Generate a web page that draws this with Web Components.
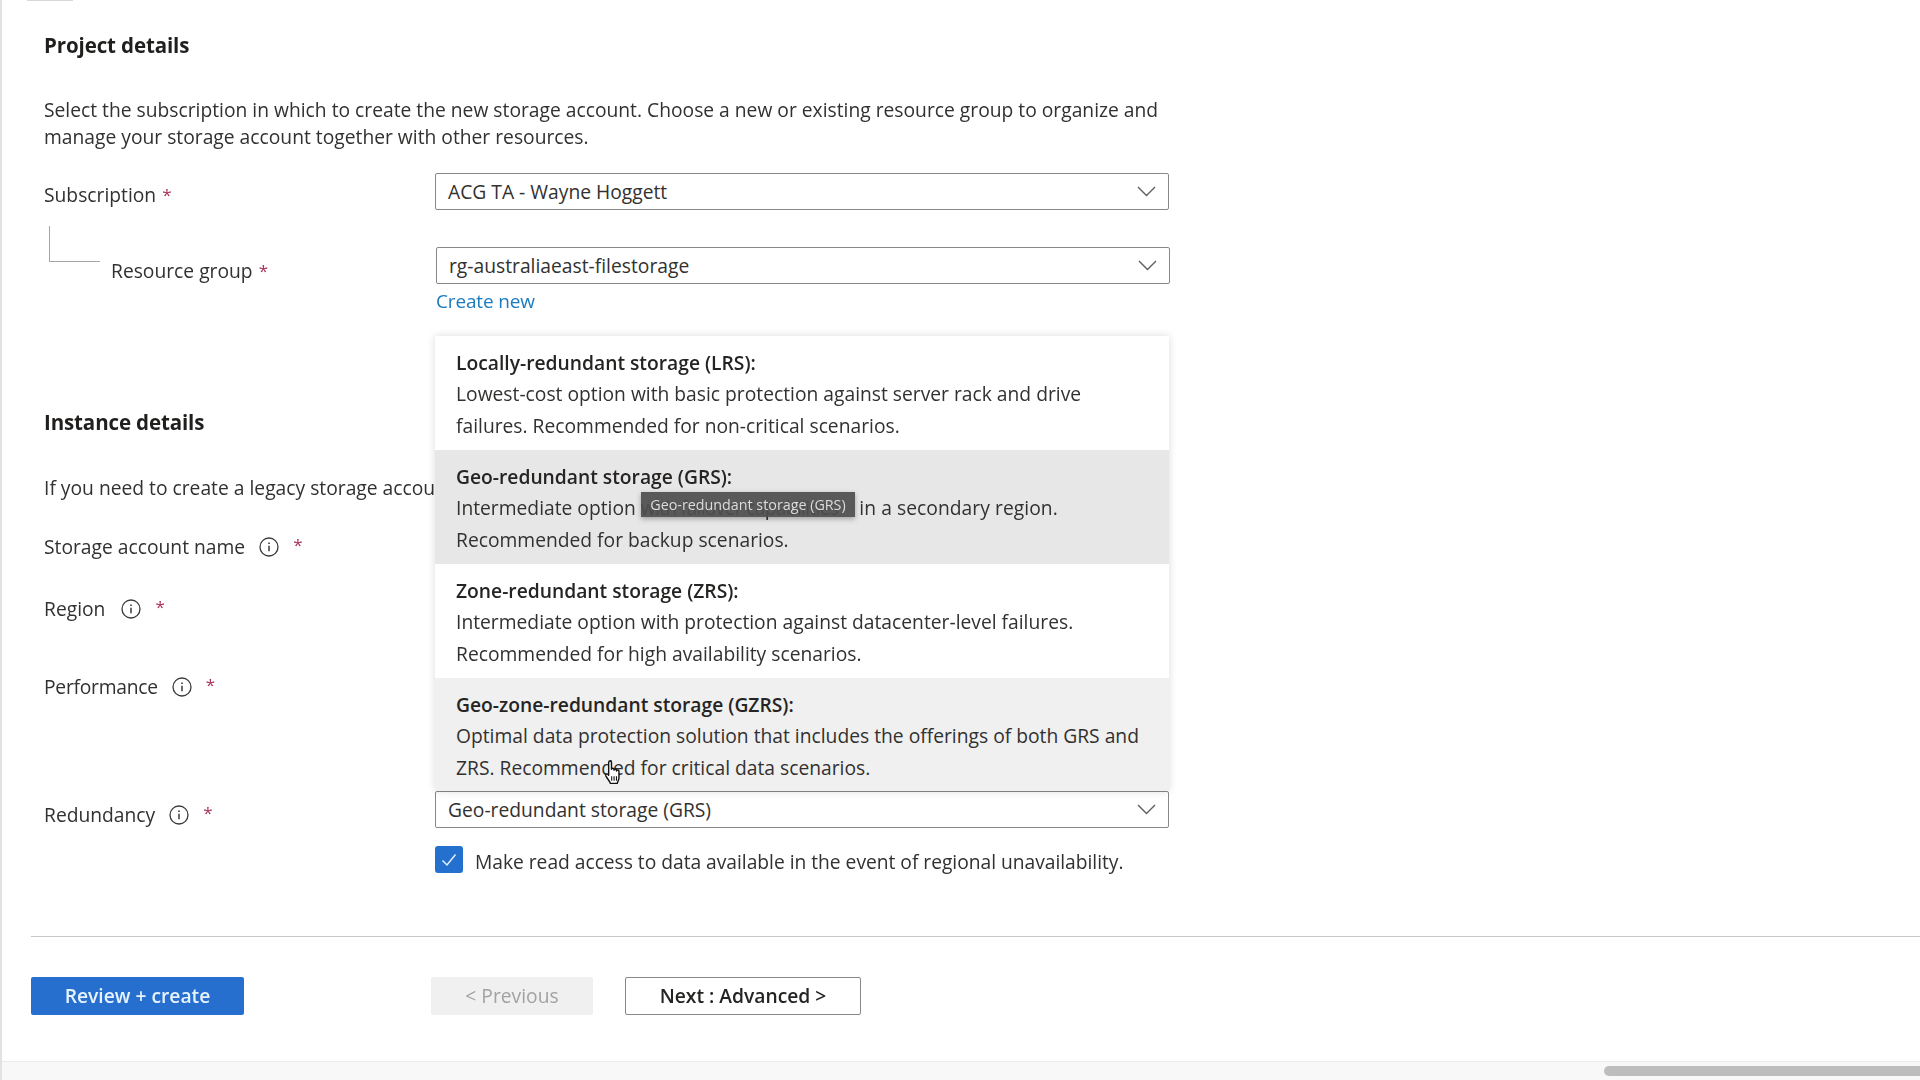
<!DOCTYPE html>
<html>
<head>
<meta charset="utf-8">
<title>Create a storage account</title>
<style>
    html, body { margin: 0; padding: 0; background: #fff; }
    body { width: 1920px; height: 1080px; overflow: hidden; font-family: "Open Sans", "Liberation Sans", sans-serif; }
</style>
</head>
<body>
<az-page>
    <az-heading style="margin-top: 30px">Project details</az-heading>
    <az-text style="margin-top: 35.500px; width: 1130px">Select the subscription in which to create the new storage account. Choose a new or existing resource group to organize and manage your storage account together with other resources.</az-text>

    <az-field label="Subscription" required style="margin-top: 22.500px">
        <az-select value="ACG TA - Wayne Hoggett"></az-select>
    </az-field>
    <az-field label="Resource group" required nested style="margin-top: 37px">
        <az-select value="rg-australiaeast-filestorage" style="margin: 0 -1px 0 1px"></az-select>
        <az-link>Create new</az-link>
    </az-field>

    <az-heading style="margin-top: 85px">Instance details</az-heading>
    <az-text style="margin-top: 37px; width: 391px; height: 27px; white-space: nowrap">If you need to create a legacy storage accou</az-text>

    <az-field label="Storage account name" info required style="margin-top: 32px; height: 27px"></az-field>
    <az-field label="Region" info required style="margin-top: 35px; height: 27px"></az-field>
    <az-field label="Performance" info required style="margin-top: 51px; height: 27px"></az-field>

    <az-field label="Redundancy" info required style="margin-top: 91px">
        <az-select value="Geo-redundant storage (GRS)">
            <az-dropdown slot="popup">
                <az-option title="Locally-redundant storage (LRS):">Lowest-cost option with basic protection against server rack and drive failures. Recommended for non-critical scenarios.</az-option>
                <az-option state="selected" title="Geo-redundant storage (GRS):">Intermediate option <span style="letter-spacing: -.7px">with failover capabilities</span> <span style="letter-spacing: .05px; margin-left: 16px">in a secondary region.</span> Recommended for backup scenarios.<az-tooltip slot="tip">Geo-redundant storage (GRS)</az-tooltip></az-option>
                <az-option title="Zone-redundant storage (ZRS):">Intermediate option with protection against datacenter-level failures. Recommended for high availability scenarios.</az-option>
                <az-option state="hover" style="height: 113px" title="Geo-zone-redundant storage (GZRS):">Optimal data protection solution that includes the offerings of both GRS and ZRS. Recommended for critical data scenarios.<az-cursor slot="tip"></az-cursor></az-option>
            </az-dropdown>
        </az-select>
        <az-checkbox>Make read access to data available in the event of regional unavailability.</az-checkbox>
    </az-field>

    <az-footer>
        <az-button kind="primary" style="width: 213px">Review + create</az-button>
        <az-button kind="disabled" style="width: 162px; margin-left: 187px">&lt; Previous</az-button>
        <az-button kind="outline" style="width: 236px; margin-left: 32px">Next : Advanced &gt;</az-button>
    </az-footer>
    <az-scrollbar></az-scrollbar>
</az-page>

<script>
const FONT = '"Open Sans", "Liberation Sans", sans-serif';

function shadow(el, html) {
    el.attachShadow({ mode: 'open' });
    el.shadowRoot.innerHTML = html;
}

class AzPage extends HTMLElement {
    constructor() {
        super();
        shadow(this, `
            <style>
                :host { display: block; width: 1920px; height: 1080px; box-sizing: border-box; border-left: 2px solid #e2e2e2; position: relative; color: #323130; font-family: ${FONT}; overflow: hidden; filter: blur(.4px); }
                .tick { position: absolute; left: 25px; top: 0; width: 46px; height: 1px; background: #d8d8d8; }
                .content { display: flex; flex-direction: column; padding-left: 42px; height: 1080px; box-sizing: border-box; }
            </style>
            <div class="tick"></div>
            <div class="content"><slot></slot></div>`);
    }
}

class AzHeading extends HTMLElement {
    constructor() {
        super();
        shadow(this, `
            <style>:host { display: block; font-size: 20.5px; font-weight: 700; line-height: 30px; color: #201f1e; letter-spacing: -0.12px; }</style>
            <slot></slot>`);
    }
}

class AzText extends HTMLElement {
    constructor() {
        super();
        shadow(this, `
            <style>:host { display: block; font-size: 19.250px; line-height: 27.500px; color: #323130; }</style>
            <slot></slot>`);
    }
}

class AzField extends HTMLElement {
    constructor() {
        super();
        const info = this.hasAttribute('info') ? `
            <svg class="info" width="20" height="20" viewBox="0 0 20 20" fill="none" stroke="#3b3a39">
                <circle cx="10" cy="10" r="9" stroke-width="1.300"/>
                <path d="M10 8.800v5.400" stroke-width="1.500"/>
                <path d="M10 5.400v1.700" stroke-width="1.600"/>
            </svg>` : '';
        const nested = this.hasAttribute('nested');
        shadow(this, `
            <style>
                :host { display: grid; grid-template-columns: 391px 734px; font-size: 19.250px; color: #323130; }
                .label { display: flex; align-items: flex-start; height: 27px; margin-top: 7.500px; line-height: 27px; white-space: nowrap; position: relative; }
                :host([nested]) .label { padding-left: 67px; margin-top: 9.500px; }
                :host([info]) .label { margin-top: 0; }
                :host([label="Redundancy"]) .label { margin-top: 9.500px; }
                :host([label="Performance"]) .name { letter-spacing: -.25px; }
                :host([label="Region"]) .info { margin-left: 16px; }
                .info { margin: 4px 0 0 14px; flex: none; }
                .req { color: #a8305a; margin-left: 6px; font-size: 17px; }
                :host([info]) .req { margin-left: 14px; margin-top: -2px; }
                .elbow { position: absolute; left: 5px; top: -31px; width: 50px; height: 35px; border-left: 1px solid #a6a6a6; border-bottom: 1px solid #a6a6a6; }
                .control { display: flex; flex-direction: column; min-width: 0; }
            </style>
            <div class="label">${nested ? '<div class="elbow"></div>' : ''}<span class="name">${this.getAttribute('label')}</span>${info}<span class="req">*</span></div>
            <div class="control"><slot></slot></div>`);
    }
}

class AzSelect extends HTMLElement {
    constructor() {
        super();
        shadow(this, `
            <style>
                :host { display: flex; align-items: center; justify-content: space-between; box-sizing: border-box; height: 37px; padding: 0 12px 0 12px; border: 1px solid #8a8886; border-radius: 2px; background: #fff; position: relative; font-size: 19.250px; color: #323130; }
                svg { flex: none; }
                .popup { position: absolute; left: -1px; right: -1px; bottom: calc(100% + 1px); }
            </style>
            <span>${this.getAttribute('value')}</span>
            <svg width="19" height="11" viewBox="0 0 19 11" fill="none" stroke="#605e5c" stroke-width="1.400"><path d="M1 1l8.500 8.500L18 1"/></svg>
            <div class="popup"><slot name="popup"></slot></div>`);
    }
}

class AzLink extends HTMLElement {
    constructor() {
        super();
        shadow(this, `
            <style>:host { display: block; height: 38px; line-height: 34px; margin-left: 1px; color: #1b7bbf; font-size: 19px; letter-spacing: -0.15px; }</style>
            <slot></slot>`);
    }
}

class AzDropdown extends HTMLElement {
    constructor() {
        super();
        shadow(this, `
            <style>:host { display: block; background: #fff; box-shadow: 0 0 8px rgba(0,0,0,.14); }</style>
            <slot></slot>`);
    }
}

class AzOption extends HTMLElement {
    constructor() {
        super();
        shadow(this, `
            <style>
                :host { display: block; box-sizing: border-box; height: 114px; padding: 11px 21px 0; position: relative; font-size: 19.250px; line-height: 31.300px; color: #323130; }
                :host([state=selected]) { background: #e8e7e7; }
                :host([state=hover]) { background: #f0f0f0; }
                .title { font-weight: 600; color: #252423; }
            </style>
            <div class="title">${this.getAttribute('title')}</div>
            <slot></slot>
            <slot name="tip"></slot>`);
        this.removeAttribute('title');
    }
}

class AzTooltip extends HTMLElement {
    constructor() {
        super();
        shadow(this, `
            <style>:host { position: absolute; left: 206px; top: 42px; width: 214px; height: 25px; display: flex; align-items: center; justify-content: center; background: rgba(78,78,78,.93); color: #dcdcdc; font-size: 14.300px; line-height: 20px; white-space: nowrap; box-shadow: 0 2px 5px rgba(0,0,0,.3); }</style>
            <slot></slot>`);
    }
}

class AzCursor extends HTMLElement {
    constructor() {
        super();
        shadow(this, `
            <style>:host { position: absolute; left: 168px; top: 81px; width: 20px; height: 26px; line-height: 0; }</style>
            <svg width="20" height="26" viewBox="0 0 18 24" stroke="#111" stroke-width="1.300" fill="#fff" stroke-linejoin="round">
                <path d="M5 13V3.200C5 1.400 7.600 1.400 7.600 3.200V9.500c0-1.300 2.300-1.300 2.300 0v.8c0-1.300 2.300-1.300 2.300 0v.8c0-1.200 2.300-1.200 2.300.2V17c0 2.500-1.200 3.600-1.600 5.500H6.600c-.5-2-2.300-3.500-4.100-6.700C1.600 14 3.300 12.700 5 15z"/>
                <path d="M7.800 16v4M10 16v4M12.200 16v4" fill="none" stroke-width="1"/>
            </svg>`);
    }
}

class AzCheckbox extends HTMLElement {
    constructor() {
        super();
        shadow(this, `
            <style>
                :host { display: flex; align-items: center; margin-top: 18px; height: 27px; font-size: 19.250px; letter-spacing: -0.03px; color: #323130; white-space: nowrap; }
                .box { width: 28px; height: 27px; border-radius: 3px; background: #2370cf; margin-right: 12px; display: flex; align-items: center; justify-content: center; flex: none; }
                .text { padding-top: 3px; }
            </style>
            <div class="box"><svg width="16" height="14" viewBox="0 0 16 14" fill="none" stroke="#e3f1ff" stroke-width="1.500"><path d="M1.500 7.500l4.500 4.500 8.500-10.500"/></svg></div>
            <span class="text"><slot></slot></span>`);
    }
}

class AzFooter extends HTMLElement {
    constructor() {
        super();
        shadow(this, `
            <style>
                :host { display: block; margin: 63px 0 0 -13px; border-top: 1px solid #c8c8c8; padding-top: 40px; }
                .row { display: flex; }
            </style>
            <div class="row"><slot></slot></div>`);
    }
}

class AzButton extends HTMLElement {
    constructor() {
        super();
        shadow(this, `
            <style>
                :host { display: flex; align-items: center; justify-content: center; box-sizing: border-box; height: 38px; padding-bottom: 2px; border-radius: 2px; font-size: 19.250px; white-space: nowrap; }
                :host([kind=primary]) { background: #266fce; color: #e6f3ff; font-weight: 600; }
                :host([kind=disabled]) { background: #f0f0f0; color: #a3a2a1; }
                :host([kind=outline]) { background: #fff; color: #252423; border: 1px solid #8a8886; font-weight: 600; }
            </style>
            <slot></slot>`);
    }
}

class AzScrollbar extends HTMLElement {
    constructor() {
        super();
        shadow(this, `
            <style>
                :host { display: flex; align-items: center; justify-content: flex-end; position: absolute; left: 0; right: 0; bottom: 0; height: 19px; box-sizing: border-box; border-top: 1px solid #ececec; background: #f8f8f8; }
                .thumb { width: 316px; height: 10px; border-radius: 5px 0 0 5px; background: #bdbdbd; }
            </style>
            <div class="thumb"></div>`);
    }
}

customElements.define('az-page', AzPage);
customElements.define('az-heading', AzHeading);
customElements.define('az-text', AzText);
customElements.define('az-field', AzField);
customElements.define('az-select', AzSelect);
customElements.define('az-link', AzLink);
customElements.define('az-dropdown', AzDropdown);
customElements.define('az-option', AzOption);
customElements.define('az-tooltip', AzTooltip);
customElements.define('az-cursor', AzCursor);
customElements.define('az-checkbox', AzCheckbox);
customElements.define('az-footer', AzFooter);
customElements.define('az-button', AzButton);
customElements.define('az-scrollbar', AzScrollbar);
</script>
</body>
</html>
